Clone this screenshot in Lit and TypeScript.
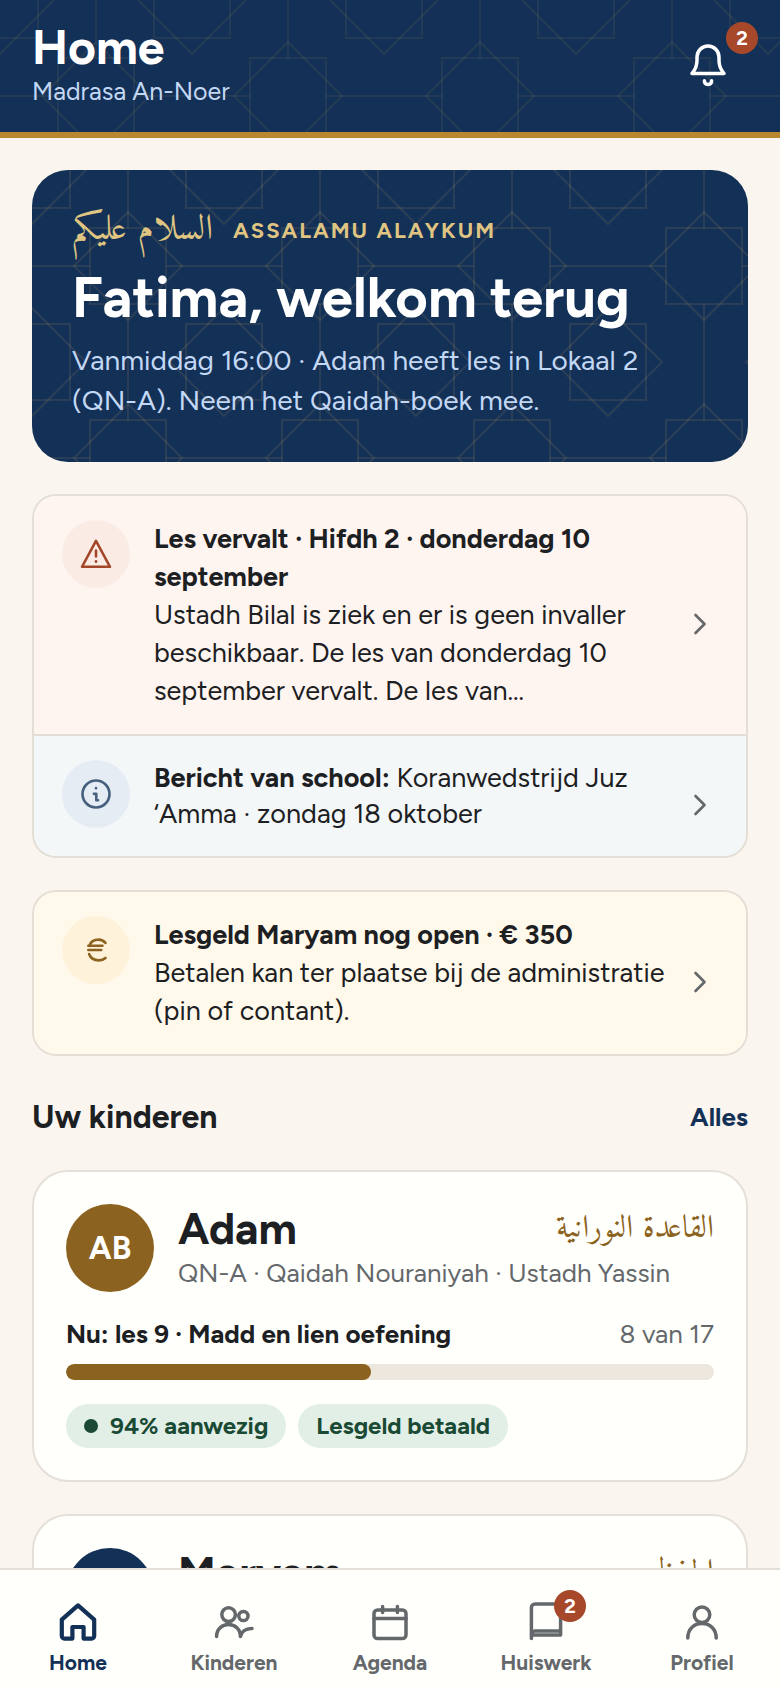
import { LitElement, html, css, svg, unsafeCSS, nothing } from "lit";
import { customElement, property } from "lit/decorators.js";
import { classMap } from "lit/directives/class-map.js";

// Girih tile: an eight-pointed star in the middle, quarter stars in the corners, links between the middle stars.
const star = (x: number, y: number) =>
  `<rect x='${x - 38}' y='${y - 38}' width='76' height='76'/><path d='M${x} ${y - 54}L${x + 54} ${y}L${x} ${y + 54}L${x - 54} ${y}Z'/>`;

const girih = (opacity: number) => {
  const body =
    star(96, 96) + star(0, 0) + star(192, 0) + star(0, 192) + star(192, 192) +
    "<path d='M96 0V58M96 134V192M0 96H58M134 96H192'/>";
  const image = `<svg xmlns='http://www.w3.org/2000/svg' width='192' height='192'><g fill='none' stroke='#b89a5c' stroke-opacity='${opacity}' stroke-width='2'>${body}</g></svg>`;
  return unsafeCSS(`url("data:image/svg+xml,${encodeURIComponent(image)}")`);
};

const icons: Record<string, unknown> = {
  bell: svg`<path d="M4 16.7c1.7-1.9 2.5-4 2.5-6.6V8.5a5.5 5.5 0 0 1 11 0v1.6c0 2.6.8 4.7 2.5 6.6z"/><path d="M10.200 20.400c0 1.100.7 1.800 1.800 1.800s1.800-.7 1.800-1.800"/>`,
  home: svg`<path d="M3.900 10.800 12 3.700l8.100 7.100V19a1.300 1.300 0 0 1-1.300 1.300H14.800V14.500H9.200v5.800H5.200A1.300 1.300 0 0 1 3.900 19z"/>`,
  users: svg`<circle cx="9.300" cy="8.300" r="3.400"/><circle cx="16.700" cy="9" r="2.300"/><path d="M3.300 19.300C3.300 15.600 6 13.300 9.250 13.300S15.200 15.600 15.200 19.300C15.600 17 17.800 15.100 21 15.200"/>`,
  calendar: svg`<rect x="4" y="6" width="16" height="14.300" rx="1.800"/><path d="M4 10.200h16M8.300 4.200v3M15.700 4.200v3"/>`,
  book: svg`<path d="M19.300 16.500V3H6.500a1.800 1.800 0 0 0-1.800 1.800V20.300M19.300 16.500H6.500a1.800 1.800 0 0 0-1.800 1.800M5 18.500H19.300V16.500"/>`,
  person: svg`<circle cx="12" cy="8.400" r="3.900"/><path d="M4.900 20c0-4.300 3-7.200 7.100-7.200s7.100 2.900 7.100 7.200"/>`,
  warning: svg`<path d="M12 3.200 21.300 20.500H2.700z"/><path d="M12 9.700v4M12 16.900v.3"/>`,
  info: svg`<circle cx="12" cy="12" r="9"/><path d="M10.600 11.900H12.200V16.200H13.400M12 8v.1"/>`,
  euro: svg`<path d="M18.300 7.300C17 5.800 15.600 5.100 13.900 5.100 10.700 5.100 8.300 6.800 7.500 9.200M6.900 9.200h9.400M6.900 12h8.600M7.400 14.700c.9 2.600 3.400 4.200 6.500 4.200 1.700 0 3.200-.5 4.400-1.600"/>`,
  chevron: svg`<path d="m9 6 6 6-6 6"/>`,
};

const icon = (name: string) =>
  html`<svg class="icon" viewBox="0 0 24 24" aria-hidden="true">${icons[name]}</svg>`;

const base = css`
  * { box-sizing: border-box; margin: 0; padding: 0; }
  .icon {
    display: block;
    flex: none;
    width: 36px;
    height: 36px;
    fill: none;
    stroke: currentColor;
    stroke-width: 1.75;
    stroke-linecap: round;
    stroke-linejoin: round;
  }
  .arabic { font-family: Amiri, serif; font-weight: 400; }
  .badge {
    position: absolute;
    display: grid;
    place-items: center;
    width: 32px;
    height: 32px;
    border-radius: 50%;
    background: #a8482a;
    color: #fff;
    font-size: 20px;
    line-height: 32px;
    font-weight: 700;
  }
`;

@customElement("notice-row")
class NoticeRow extends LitElement {
  @property() tone = "info";
  @property() symbol = "info";
  @property({ type: Boolean }) compact = false;

  static styles = [base, css`
    :host { display: block; }
    .row {
      display: flex;
      align-items: center;
      gap: 12px;
      padding: 24px 28px;
      color: inherit;
      text-decoration: none;
      font-size: 27px;
      line-height: 38px;
    }
    .compact { line-height: 36px; }
    .disc {
      display: grid;
      place-items: center;
      align-self: flex-start;
      flex: none;
      width: 68px;
      height: 68px;
      margin-right: 12px;
      border-radius: 50%;
    }
    .text { flex: 1; min-width: 0; }
    .more { padding-top: 18px; color: #64686b; }
    .alert { background: #fef5f1; }
    .alert .disc { background: #faece5; color: #a3462a; }
    .info { background: #f3f7f8; }
    .info .disc { background: #e5ecf4; color: #46607d; }
    .fee { background: #fff9eb; }
    .fee .disc { background: #fff2da; color: #8c6220; }
  `];

  render() {
    return html`
      <a href="#bericht" class=${classMap({ row: true, compact: this.compact, [this.tone]: true })}>
        <span class="disc">${icon(this.symbol)}</span>
        <div class="text"><slot></slot></div>
        <span class="more">${icon("chevron")}</span>
      </a>`;
  }
}

@customElement("child-card")
class ChildCard extends LitElement {
  @property() name = "";
  @property() initials = "";
  @property() course = "";
  @property() detail = "";
  @property() lesson = "";
  @property() tone = "gold";
  @property({ type: Number }) done = 0;
  @property({ type: Number }) total = 1;
  @property({ type: Array }) chips: { label: string; dot?: boolean }[] = [];

  static styles = [base, css`
    :host { display: block; }
    .card {
      display: flex;
      flex-direction: column;
      gap: 24px;
      padding: 32px;
      border: 2px solid #e4dfd8;
      border-radius: 36px;
      background: #fffffc;
    }
    .head { display: flex; align-items: center; gap: 24px; }
    .avatar {
      display: grid;
      place-items: center;
      flex: none;
      width: 88px;
      height: 88px;
      border-radius: 50%;
      color: #fff;
      font-size: 32px;
      font-weight: 700;
    }
    .gold { background: #8c6220; }
    .navy { background: #133056; }
    .who { flex: 1; min-width: 0; }
    .title { display: flex; justify-content: space-between; height: 50px; line-height: 50px; }
    .name { font-size: 44px; line-height: 50px; font-weight: 700; }
    .course { font-size: 32px; color: #8c6220; }
    .detail { font-size: 26px; line-height: 38px; color: #64686b; }
    .progress { display: flex; flex-direction: column; gap: 12px; }
    .labels { display: flex; justify-content: space-between; gap: 16px; font-size: 26px; line-height: 36px; }
    .lesson { font-weight: 700; }
    .count { color: #64686b; }
    .track { height: 16px; border-radius: 8px; background: #ede7dd; overflow: hidden; }
    .fill { height: 100%; border-radius: 8px; }
    .chips { display: flex; flex-wrap: wrap; gap: 12px; list-style: none; }
    .chip {
      display: flex;
      align-items: center;
      gap: 12px;
      padding: 0 18px;
      border-radius: 22px;
      background: #e1efe7;
      color: #1a4a34;
      font-size: 24px;
      line-height: 44px;
      font-weight: 700;
    }
    .dot { width: 14px; height: 14px; border-radius: 50%; background: currentColor; }
  `];

  render() {
    return html`
      <article class="card">
        <div class="head">
          <span class="avatar ${this.tone}">${this.initials}</span>
          <div class="who">
            <div class="title">
              <h3 class="name">${this.name}</h3>
              <span class="course arabic" lang="ar" dir="rtl">${this.course}</span>
            </div>
            <p class="detail">${this.detail}</p>
          </div>
        </div>
        <div class="progress">
          <div class="labels">
            <span class="lesson">${this.lesson}</span>
            <span class="count">${this.done} van ${this.total}</span>
          </div>
          <div class="track" role="progressbar" aria-label=${this.lesson}
            aria-valuenow=${this.done} aria-valuemin="0" aria-valuemax=${this.total}>
            <div class="fill ${this.tone}" style="width:${(this.done / this.total) * 100}%"></div>
          </div>
        </div>
        <ul class="chips">
          ${this.chips.map((c) => html`
            <li class="chip">${c.dot ? html`<span class="dot"></span>` : nothing}${c.label}</li>`)}
        </ul>
      </article>`;
  }
}

const tabs = [
  { id: "home", label: "Home", icon: "home", active: true },
  { id: "kinderen", label: "Kinderen", icon: "users" },
  { id: "agenda", label: "Agenda", icon: "calendar" },
  { id: "huiswerk", label: "Huiswerk", icon: "book", count: 2 },
  { id: "profiel", label: "Profiel", icon: "person" },
];

@customElement("app-root")
class AppRoot extends LitElement {
  static styles = [base, css`
    :host {
      display: grid;
      grid-template-rows: auto minmax(0, 1fr) auto;
      height: 100vh;
      background: #faf5ef;
      color: #1d2022;
      font-family: Figtree, Lato, sans-serif;
    }
    .top {
      display: flex;
      align-items: center;
      justify-content: space-between;
      padding: 20px 32px 24px;
      border-bottom: 6px solid #b98730;
      background: ${girih(0.1)} 0 0 #133056;
      color: #fff;
    }
    .brand { font-size: 48px; line-height: 54px; font-weight: 700; }
    .school { font-size: 25px; line-height: 34px; color: #c3d8f5; }
    .alerts {
      position: relative;
      display: grid;
      place-items: center;
      width: 80px;
      height: 80px;
      border: 0;
      background: none;
      color: inherit;
      font-family: inherit;
    }
    .alerts .icon, .tab .icon { width: 48px; height: 48px; }
    .alerts .badge { top: -2px; right: -10px; }
    .main {
      display: flex;
      flex-direction: column;
      gap: 32px;
      padding: 32px;
      overflow-y: auto;
      scrollbar-width: none;
    }
    .main > * { flex: none; }
    .hero {
      display: flex;
      flex-direction: column;
      gap: 10px;
      padding: 36px 40px 42px;
      border-radius: 36px;
      background: ${girih(0.14)} 0 0 #133056;
      color: #fff;
    }
    .greeting { display: flex; align-items: center; gap: 20px; height: 50px; line-height: 50px; color: #dfc482; }
    .salaam { font-size: 36px; }
    .latin { font-size: 22px; font-weight: 700; letter-spacing: 2px; }
    .welcome { font-size: 56px; line-height: 64px; font-weight: 700; }
    .next { font-size: 28px; line-height: 40px; color: #c3d8f5; }
    .notices { border: 2px solid #e4dfd6; border-radius: 24px; overflow: hidden; }
    .notices > * + * { border-top: 2px solid #e4dfd6; }
    .strong { display: block; font-weight: 700; }
    .section {
      display: flex;
      align-items: center;
      justify-content: space-between;
      padding: 9px 0 1px;
      line-height: 40px;
    }
    .heading { font-size: 32px; font-weight: 700; }
    .all { color: #133056; font-size: 26px; font-weight: 700; text-decoration: none; }
    .tabs {
      display: grid;
      grid-template-columns: repeat(5, 1fr);
      padding: 28px 0 12px;
      border-top: 2px solid #e4dfd8;
      background: #fffffc;
    }
    .tab {
      display: flex;
      flex-direction: column;
      align-items: center;
      gap: 4px;
      color: #64686b;
      font-size: 21px;
      line-height: 26px;
      font-weight: 700;
      text-decoration: none;
    }
    .active { color: #133056; }
    .active .icon { stroke-width: 2.1; }
    .glyph { position: relative; }
    .tab .badge { top: -8px; left: 32px; }
  `];

  render() {
    return html`
      <header class="top">
        <div>
          <h1 class="brand">Home</h1>
          <p class="school">Madrasa An-Noer</p>
        </div>
        <button class="alerts" type="button" aria-label="Meldingen">
          ${icon("bell")}<span class="badge">2</span>
        </button>
      </header>

      <main class="main">
        <section class="hero">
          <div class="greeting">
            <span class="salaam arabic" lang="ar" dir="rtl">السلام عليكم</span>
            <span class="latin">ASSALAMU ALAYKUM</span>
          </div>
          <h2 class="welcome">Fatima, welkom terug</h2>
          <p class="next">Vanmiddag 16:00 · Adam heeft les in Lokaal 2 (QN-A). Neem het Qaidah-boek mee.</p>
        </section>

        <section class="notices" aria-label="Berichten">
          <notice-row tone="alert" symbol="warning">
            <b class="strong">Les vervalt · Hifdh 2 · donderdag 10 september</b>
            Ustadh Bilal is ziek en er is geen invaller beschikbaar. De les van donderdag 10 september vervalt. De les van…
          </notice-row>
          <notice-row tone="info" symbol="info" compact>
            <b>Bericht van school:</b> Koranwedstrijd Juz ‘Amma · zondag 18 oktober
          </notice-row>
        </section>

        <section class="notices" aria-label="Lesgeld">
          <notice-row tone="fee" symbol="euro">
            <b class="strong">Lesgeld Maryam nog open · € 350</b>
            Betalen kan ter plaatse bij de administratie (pin of contant).
          </notice-row>
        </section>

        <div class="section">
          <h2 class="heading">Uw kinderen</h2>
          <a class="all" href="#kinderen">Alles</a>
        </div>

        <child-card name="Adam" initials="AB" course="القاعدة النورانية"
          detail="QN-A · Qaidah Nouraniyah · Ustadh Yassin"
          lesson="Nu: les 9 · Madd en lien oefening" .done=${8} .total=${17}
          .chips=${[{ label: "94% aanwezig", dot: true }, { label: "Lesgeld betaald" }]}></child-card>

        <child-card name="Maryam" initials="MB" tone="navy" course="الحفظ"
          detail="Hifdh 2 · Ustadh Bilal"
          lesson="Nu: Juz ‘Amma" .done=${12} .total=${37}
          .chips=${[{ label: "Lesgeld open" }]}></child-card>
      </main>

      <nav class="tabs" aria-label="Hoofdmenu">
        ${tabs.map((t) => html`
          <a class=${classMap({ tab: true, active: !!t.active })} href="#${t.id}"
            aria-current=${t.active ? "page" : nothing}>
            <span class="glyph">${icon(t.icon)}${t.count ? html`<span class="badge">${t.count}</span>` : nothing}</span>
            ${t.label}
          </a>`)}
      </nav>`;
  }
}
